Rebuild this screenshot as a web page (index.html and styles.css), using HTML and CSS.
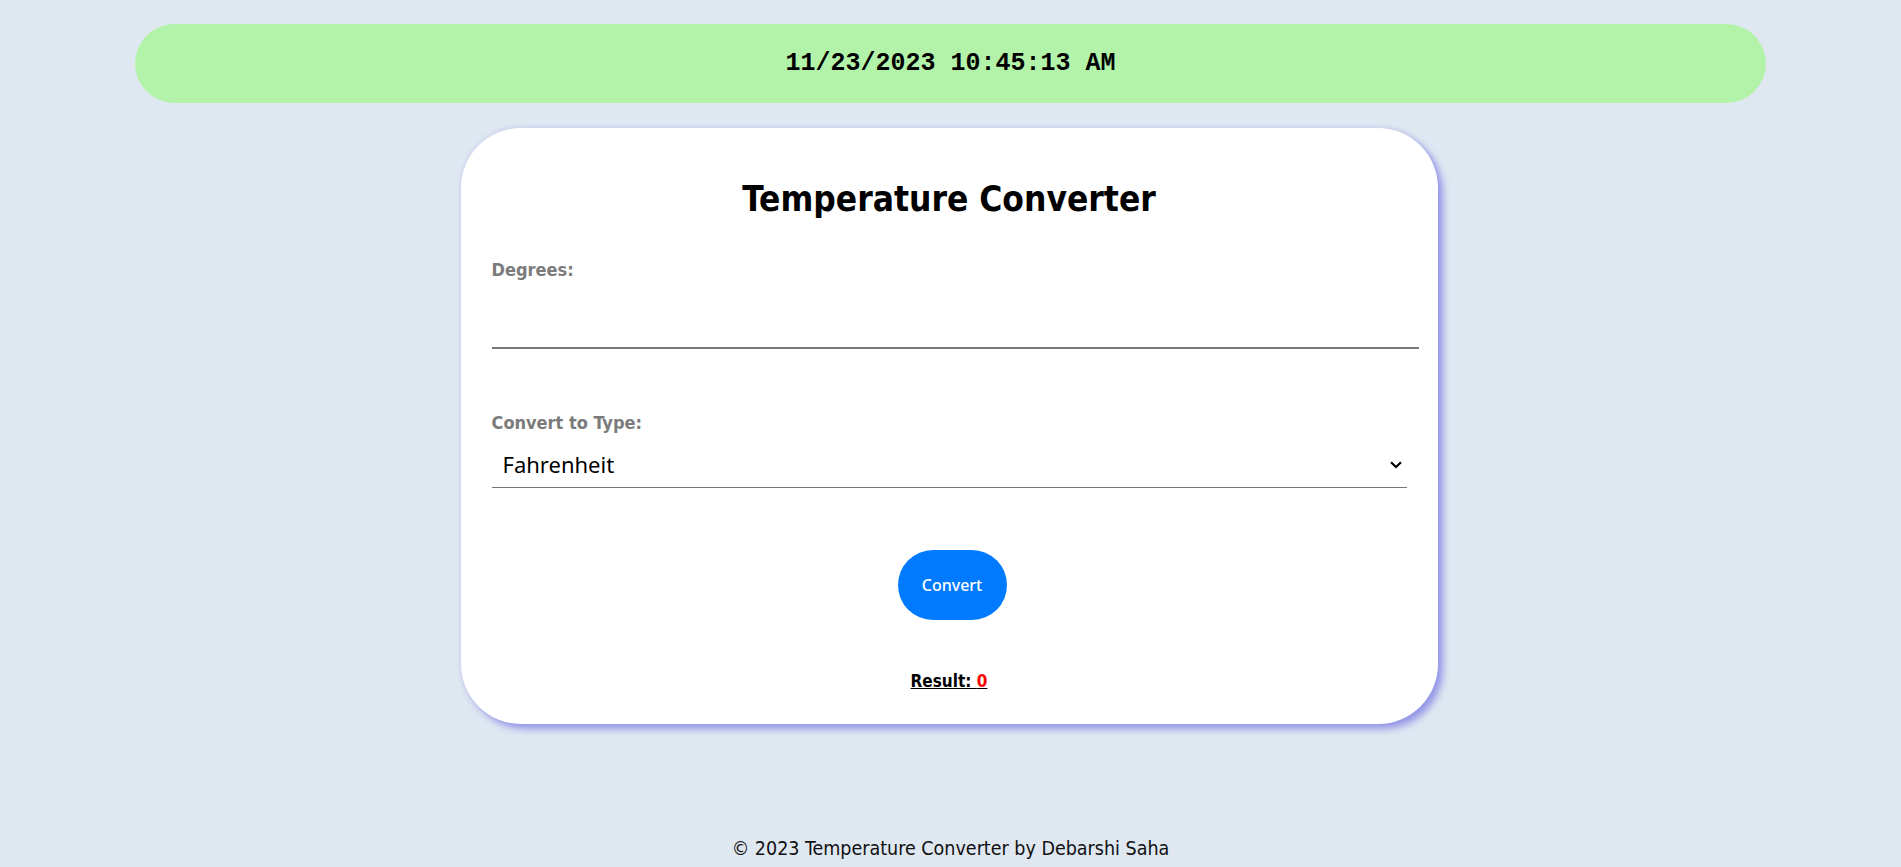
FILE: index.html
```html
<!DOCTYPE html>
<html lang="en">
<head>
<meta charset="utf-8">
<title>Temperature Converter</title>
<link rel="stylesheet" href="styles.css">
</head>
<body>
  <div class="clock">11/23/2023 10:45:13 AM</div>
  <main class="card">
    <h1 class="title">Temperature Converter</h1>
    <label class="field-label" for="degrees">Degrees:</label>
    <input class="degrees-input" id="degrees" type="text">
    <label class="field-label type-label" for="type">Convert to Type:</label>
    <div class="select-wrap">
      <select class="type-select" id="type">
        <option>Fahrenheit</option>
        <option>Celsius</option>
      </select>
      <svg class="chevron" width="12" height="8" viewBox="0 0 12 8"><path d="M1 1.2 L6 6 L11 1.2" fill="none" stroke="#000" stroke-width="2.2"/></svg>
    </div>
    <div class="btn-row"><button class="convert-btn" type="button">Convert</button></div>
    <p class="result">Result: <span class="result-value">0</span></p>
  </main>
  <footer class="footer">© 2023 Temperature Converter by Debarshi Saha</footer>
</body>
</html>
```
FILE: styles.css
```css
html, body {
  margin: 0;
  padding: 0;
}
body {
  background: #dfe7f1;
  min-height: 100vh;
  display: flex;
  flex-direction: column;
  align-items: center;
  font-family: "DejaVu Sans Condensed", "DejaVu Sans", sans-serif;
  font-stretch: condensed;
  box-sizing: border-box;
}
.clock {
  align-self: stretch;
  margin: 24px 135px 0;
  height: 79px;
  border-radius: 40px;
  background: #b3f3a9;
  display: flex;
  align-items: center;
  justify-content: center;
  font-family: "Liberation Mono", "Courier New", monospace;
  font-weight: bold;
  font-size: 25px;
  color: #000;
}
.card {
  margin: 25px 3px 0 0;
  width: 977px;
  box-sizing: border-box;
  background: #fff;
  border-radius: 60px;
  padding: 49px 31px 32px;
  box-shadow: 5px 5px 7px rgba(120, 120, 228, 0.7), 0 -1px 4px rgba(150, 150, 230, 0.25);
  display: flex;
  flex-direction: column;
}
.title {
  margin: 0;
  font-size: 35px;
  line-height: 44px;
  font-weight: bold;
  text-align: center;
  color: #000;
}
.field-label {
  display: block;
  margin-top: 37px;
  font-size: 18px;
  line-height: 24px;
  color: #7b7b7b;
  font-weight: bold;
}
.type-label {
  margin-top: 62px;
}
.degrees-input {
  display: block;
  width: calc(100% + 12px);
  box-sizing: border-box;
  height: 56px;
  margin-top: 11px;
  border: none;
  border-bottom: 2px solid #777;
  outline: none;
  background: transparent;
  font-size: 20px;
}
.select-wrap {
  position: relative;
  margin-top: 5px;
}
.type-select {
  display: block;
  width: 100%;
  height: 48px;
  box-sizing: border-box;
  appearance: none;
  -webkit-appearance: none;
  border: none;
  border-bottom: 1px solid #777;
  border-radius: 0;
  background: transparent;
  padding: 0 0 0 11px;
  font-family: "Noto Sans", sans-serif;
  font-stretch: normal;
  font-size: 22px;
  color: #000;
  outline: none;
}
.chevron {
  position: absolute;
  right: 5px;
  top: 21px;
  pointer-events: none;
}
.btn-row {
  display: flex;
  justify-content: center;
  margin-top: 62px;
}
.convert-btn {
  width: 109px;
  height: 70px;
  margin-left: 6px;
  border: none;
  border-radius: 35px;
  background: #007bff;
  color: #fff;
  font-family: "Noto Sans", sans-serif;
  font-stretch: normal;
  font-size: 16px;
  font-weight: 500;
  padding: 0;
}
.result {
  margin: 50px 0 0;
  text-align: center;
  font-size: 17px;
  line-height: 22px;
  font-weight: bold;
  color: #000;
  text-decoration: underline;
}
.result-value {
  color: #ff0000;
}
.footer {
  margin-top: auto;
  padding-bottom: 6px;
  font-size: 19.5px;
  line-height: 24px;
  color: #111;
}
```
